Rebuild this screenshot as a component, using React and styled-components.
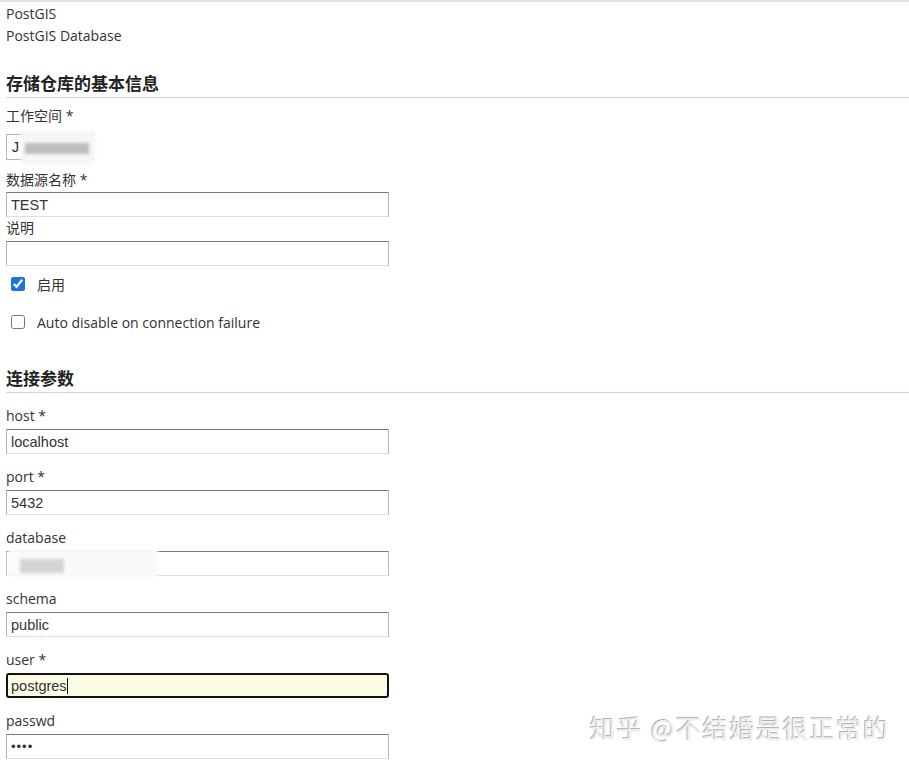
import React from "react";
import styled, { createGlobalStyle } from "styled-components";

const GlobalStyle = createGlobalStyle`
    html, body {
        margin: 0;
        padding: 0;
        background: #fff;
    }
    body {
        font-family: "Open Sans", "Noto Sans CJK SC", sans-serif;
        font-size: 14px;
        color: #333;
    }
`;

const Page = styled.div`
    position: relative;
    width: 909px;
    height: 761px;
    overflow: hidden;
    border-top: 2px solid #e2e2e2;
    box-sizing: border-box;
    padding: 1px 6px 0 6px;
`;

const InfoLine = styled.div`
    line-height: 22px;
    font-size: 14px;
`;

const SectionTitle = styled.h3`
    margin: ${(p) => p.$top}px -6px 0 0;
    padding: 0 0 2px 0;
    font-size: 17px;
    line-height: 24px;
    font-weight: 700;
    color: #222;
    font-family: "Noto Sans CJK SC", "Open Sans", sans-serif;
    border-bottom: 1px solid #d3d6b8;
`;

const Field = styled.div`
    margin-top: ${(p) => p.$top}px;
`;

const Label = styled.label`
    display: block;
    line-height: 20px;
    font-size: 14px;
    color: #333;
    margin-bottom: ${(p) => p.$gap}px;
`;

const TextInput = styled.input`
    display: block;
    box-sizing: border-box;
    width: 383px;
    height: 25px;
    margin: 0;
    padding: 0 4px;
    font-family: "Liberation Sans", Arial, sans-serif;
    font-size: ${(p) => (p.type === "password" ? "13px" : "14.5px")};
    letter-spacing: ${(p) => (p.type === "password" ? "1px" : "0")};
    color: #333;
    background: #fff;
    border: 1px solid #b5b5b5;
    border-top-color: #7a7a7a;
    border-bottom-color: #dedede;
    border-radius: 0;
    outline: none;
`;

const FocusWrap = styled.div`
    position: relative;
    width: 383px;
`;

const FocusedInput = styled(TextInput)`
    background: #fbfbe3;
    border: 2px solid #111;
    border-radius: 3px;
    padding: 0 3px;
`;

const Caret = styled.span`
    position: absolute;
    left: 61px;
    top: 5px;
    width: 1px;
    height: 16px;
    background: #111;
`;

const SelectBox = styled.div`
    position: relative;
    width: 88px;
    height: 26px;
    box-sizing: border-box;
    border: 1px solid #b5b5b5;
    border-right: none;
    display: flex;
    align-items: center;
    padding-left: 5px;
    font-family: "Liberation Sans", Arial, sans-serif;
    font-size: 14px;
    color: #222;
`;

const Blur = styled.span`
    position: absolute;
    left: ${(p) => p.$left}px;
    top: ${(p) => p.$top}px;
    width: ${(p) => p.$w}px;
    height: ${(p) => p.$h}px;
    background: ${(p) => p.$bg};
    filter: blur(1.5px);
`;

const CheckRow = styled.label`
    display: flex;
    align-items: center;
    height: 20px;
    margin-top: ${(p) => p.$top}px;
    font-size: 14px;
    color: #333;
`;

const Check = styled.input`
    width: 14px;
    height: 14px;
    margin: 0 12px 0 5px;
    accent-color: #1a73e8;
`;

const Watermark = styled.div`
    position: absolute;
    left: 590px;
    top: 707px;
    font-family: "Noto Sans CJK SC", sans-serif;
    font-size: 25px;
    letter-spacing: 1.7px;
    color: #ededed;
    text-shadow: -1px -1px 0 #b4b4b4, 1px 1px 0 #fafafa;
    white-space: nowrap;
`;

const params = [
    { label: "host *", value: "localhost" },
    { label: "port *", value: "5432" },
    { label: "database", value: "", blurred: true },
    { label: "schema", value: "public" },
];

const App = () => {
    return (
        <Page>
            <GlobalStyle />
            <InfoLine>PostGIS</InfoLine>
            <InfoLine>PostGIS Database</InfoLine>

            <SectionTitle $top={24}>存储仓库的基本信息</SectionTitle>
            <Field $top={8}>
                <Label $gap={8}>工作空间 *</Label>
                <SelectBox>
                    J
                    <Blur $left={14} $top={-4} $w={74} $h={34} $bg="#f6f6f6" />
                    <Blur $left={18} $top={8} $w={64} $h={11} $bg="#bdbdc2" />
                </SelectBox>
            </Field>
            <Field $top={10}>
                <Label $gap={2}>数据源名称 *</Label>
                <TextInput readOnly value="TEST" />
            </Field>
            <Field $top={1}>
                <Label $gap={3}>说明</Label>
                <TextInput readOnly value="" />
            </Field>
            <CheckRow $top={8}>
                <Check type="checkbox" defaultChecked />
                启用
            </CheckRow>
            <CheckRow $top={18}>
                <Check type="checkbox" />
                Auto disable on connection failure
            </CheckRow>

            <SectionTitle $top={34}>连接参数</SectionTitle>
            {params.map((p) => (
                <Field key={p.label} $top={13}>
                    <Label $gap={3}>{p.label}</Label>
                    {p.blurred ? (
                        <FocusWrap>
                            <TextInput readOnly value="" />
                            <Blur $left={2} $top={-2} $w={150} $h={28} $bg="#fafafa" />
                            <Blur $left={14} $top={8} $w={44} $h={14} $bg="#d4d4d7" />
                        </FocusWrap>
                    ) : (
                        <TextInput readOnly value={p.value} />
                    )}
                </Field>
            ))}
            <Field $top={13}>
                <Label $gap={3}>user *</Label>
                <FocusWrap>
                    <FocusedInput readOnly value="postgres" />
                    <Caret />
                </FocusWrap>
            </Field>
            <Field $top={13}>
                <Label $gap={3}>passwd</Label>
                <TextInput type="password" readOnly value="1234" />
            </Field>

            <Watermark>知乎 @不结婚是很正常的</Watermark>
        </Page>
    );
};

export default App;
